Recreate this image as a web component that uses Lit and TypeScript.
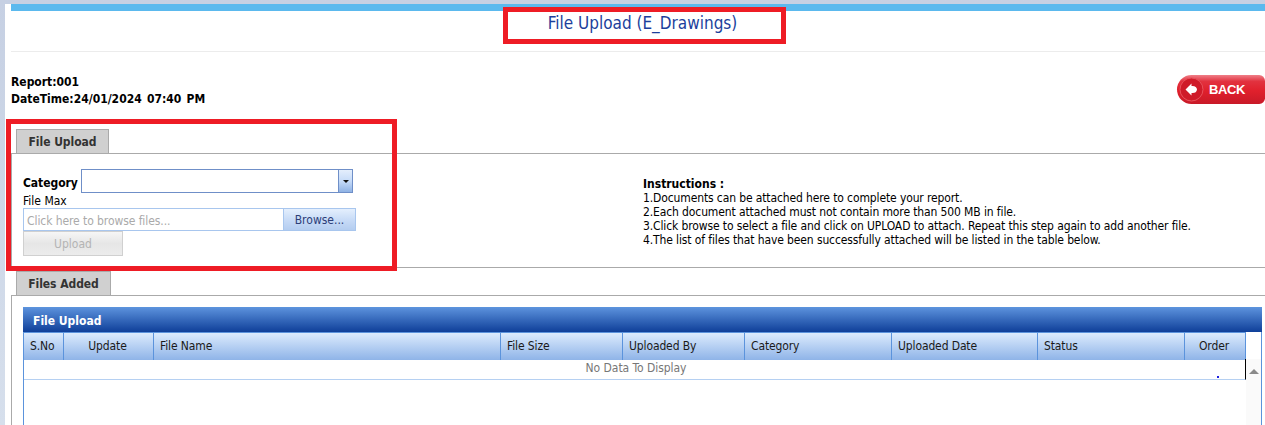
import { LitElement, html, css, svg } from "lit";
import { customElement } from "lit/decorators.js";

const COLS = ["S.No", "Update", "File Name", "File Size", "Uploaded By", "Category", "Uploaded Date", "Status", "Order"];
const INSTR = [
  "1.Documents can be attached here to complete your report.",
  "2.Each document attached must not contain more than 500 MB in file.",
  "3.Click browse to select a file and click on UPLOAD to attach. Repeat this step again to add another file.",
  "4.The list of files that have been successfully attached will be listed in the table below.",
];

@customElement("app-root")
export class AppRoot extends LitElement {
  static styles = css`
    :host {
      display: block;
      position: relative;
      width: 1265px;
      height: 425px;
      overflow: hidden;
      box-sizing: border-box;
      padding: 4px 0 0 5px;
      background: linear-gradient(#c6d0e3, #d6dfec);
      font-family: "DejaVu Sans Condensed", "DejaVu Sans", sans-serif;
      font-size: 12px;
      color: #000;
    }
    * { box-sizing: border-box; }
    .page { background: #fff; height: 421px; padding-left: 6px; }
    .topbar { height: 7px; background: #5bb9ee; }
    .title {
      height: 41px;
      border-bottom: 1px solid #ececec;
      text-align: center;
      font-size: 17px;
      line-height: 24px;
      color: #1c3f9c;
      padding-left: 9px;
    }
    .head {
      display: flex;
      justify-content: space-between;
      padding-top: 22px;
      height: 77px;
      font-weight: bold;
      line-height: 17px;
    }
    .stamp { word-spacing: 1.5px; }
    .back {
      margin-top: 1px;
      width: 88px;
      height: 29px;
      border-radius: 15px 6px 6px 15px;
      background: linear-gradient(#ef7f88 0, #e2323f 22%, #e0202c 55%, #c81a28 100%);
      display: flex;
      align-items: center;
      gap: 5px;
      padding-left: 2px;
      color: #fff;
      font-family: "Liberation Sans", sans-serif;
      font-size: 13px;
      font-weight: bold;
      letter-spacing: -0.4px;
    }
    .tabs { height: 25px; padding-left: 5px; border-bottom: 1px solid #aaa; }
    .tab {
      display: inline-block;
      height: 24px;
      width: 93px;
      background: #d0d0d0;
      border: 1px solid #aaa;
      border-bottom: 0;
      text-align: center;
      font-weight: bold;
      line-height: 24px;
      color: #333;
      letter-spacing: -0.05px;
    }
    .tab.second { width: 95px; }
    .panel {
      height: 113px;
      border-left: 1px solid #aaa;
      padding: 15px 0 0 11px;
      display: flex;
    }
    .form { width: 620px; }
    .row { display: flex; height: 24px; }
    .label { width: 58px; font-weight: bold; line-height: 28px; letter-spacing: -0.05px; }
    .select {
      width: 272px;
      height: 24px;
      border: 1px solid #6f8fc8;
      display: flex;
      justify-content: flex-end;
      background: #fff;
    }
    .sel-btn {
      width: 14px;
      background: linear-gradient(#e4eefc, #c6dbf8 50%, #8fb2e4);
      border-left: 1px solid #6f8fc8;
      display: flex;
      align-items: center;
      justify-content: center;
    }
    .caret { width: 0; height: 0; border: 3px solid transparent; border-top: 3px solid #111; border-bottom: 0; }
    .max { height: 14px; line-height: 16px; }
    .upl { display: flex; margin-top: 1px; height: 23px; }
    .input {
      width: 260px;
      border: 1px solid #a8c6ee;
      border-right: 0;
      color: #aaa;
      padding-left: 3px;
      line-height: 24px;
      letter-spacing: -0.08px;
    }
    .browse {
      width: 73px;
      border: 1px solid #a8c6ee;
      background: linear-gradient(#e4effd, #c9dcf7 50%, #b4cdf0);
      color: #2c3e78;
      text-align: center;
      line-height: 22px;
    }
    .upload {
      width: 100px;
      height: 25px;
      border: 1px solid #d0d0d0;
      background: linear-gradient(#f6f6f6, #e6e6e6 50%, #ececec);
      color: #b4b4b4;
      text-align: center;
      line-height: 24px;
    }
    .instr { padding-top: 8px; line-height: 14px; letter-spacing: -0.12px; }
    .instr b { display: block; letter-spacing: 0; }
    .sep { height: 4px; border-top: 1px solid #aaa; }
    .box { height: 130px; border-left: 1px solid #aaa; padding: 11px 0 0 11px; }
    .grid {
      width: 1239px;
      height: 130px;
      border-left: 1px solid #5b93dc;
      border-right: 1px solid #5b93dc;
    }
    .gtitle {
      height: 25px;
      margin: 0 -1px;
      border-top: 1px solid #5b93dc;
      background: linear-gradient(#5a90db, #0f3f99);
      color: #fff;
      font-weight: bold;
      line-height: 26px;
      padding-left: 10px;
    }
    .cols {
      display: grid;
      width: 1222px;
      grid-template-columns: 40px 90px 347px 122px 122px 147px 146px 147px 61px;
      height: 27px;
      border-bottom: 1px solid #5b93dc;
      border-top: 1px solid #5b93dc;
    }
    .col {
      background: linear-gradient(#dcebfd, #8fb4e8);
      border-right: 1px solid #5b93dc;
      padding-left: 6px;
      line-height: 27px;
      color: #1a1a1a;
      white-space: nowrap;
      letter-spacing: -0.12px;
    }
    .col.c { text-align: center; padding-left: 0; padding-right: 2px; }
    .body { display: flex; height: 76px; }
    .rows { width: 1222px; }
    .empty {
      height: 21px;
      border-right: 1px solid #000;
      border-bottom: 1px solid #b5d0f2;
      text-align: center;
      color: #777;
      line-height: 19px;
      padding-left: 3px;
      letter-spacing: -0.05px;
      position: relative;
    }
    .dot { position: absolute; left: 1193px; top: 17px; width: 2px; height: 2px; background: #2020e0; }
    .scroll { width: 15px; background: #fafafa; display: flex; justify-content: center; padding-top: 10px; }
    .up { width: 0; height: 0; border: 5px solid transparent; border-bottom: 5px solid #8a8a8a; border-top: 0; }
    .mark { position: absolute; border: 5px solid #ee1c25; pointer-events: none; }
    .m1 { left: 503px; top: 7px; width: 283px; height: 37px; }
    .m2 { left: 6px; top: 119px; width: 391px; height: 152px; }
  `;

  render() {
    return html`
      <div class="page">
        <div class="topbar"></div>
        <div class="title">File Upload (E_Drawings)</div>
        <div class="head">
          <div>Report:001<br /><span class="stamp">DateTime:24/01/2024 07:40 PM</span></div>
          <div class="back">
            <svg width="25" height="25" viewBox="0 0 25 25">
              ${svg`<circle cx="12.5" cy="12.5" r="11.5" fill="#cf1b29" stroke="#e8525c" stroke-width="1"/>
              <path d="M6.5 12.5 L12.5 6.5 L12.5 9 Q17.5 8.5 18 12.5 Q17.5 16.5 12.5 16 L12.5 18.5 Z" fill="#fff"/>`}
            </svg>
            BACK
          </div>
        </div>
        <div class="tabs"><span class="tab">File Upload</span></div>
        <div class="panel">
          <div class="form">
            <div class="row">
              <span class="label">Category</span>
              <div class="select"><div class="sel-btn"><div class="caret"></div></div></div>
            </div>
            <div class="max">File Max</div>
            <div class="upl">
              <div class="input">Click here to browse files...</div>
              <div class="browse">Browse...</div>
            </div>
            <div class="upload">Upload</div>
          </div>
          <div class="instr">
            <b>Instructions :</b>
            ${INSTR.map((l) => html`<div>${l}</div>`)}
          </div>
        </div>
        <div class="sep"></div>
        <div class="tabs"><span class="tab second">Files Added</span></div>
        <div class="box">
          <div class="grid">
            <div class="gtitle">File Upload</div>
            <div class="cols">
              ${COLS.map((c) => html`<div class="col ${c === "Update" || c === "Order" ? "c" : ""}">${c}</div>`)}
            </div>
            <div class="body">
              <div class="rows">
                <div class="empty">No Data To Display<span class="dot"></span></div>
              </div>
              <div class="scroll"><div class="up"></div></div>
            </div>
          </div>
        </div>
      </div>
      <div class="mark m1"></div>
      <div class="mark m2"></div>
    `;
  }
}
